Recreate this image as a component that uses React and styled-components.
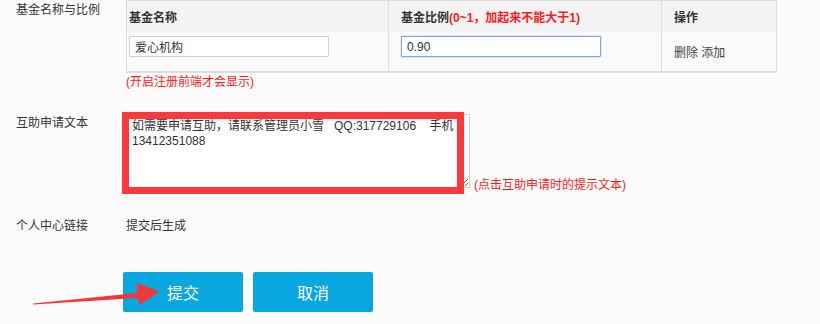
import React from "react";
import styled, { createGlobalStyle } from "styled-components";

const Global = createGlobalStyle`
  html, body { margin: 0; padding: 0; background: #fbfbfb; }
  body { font-family: "Liberation Sans", "Noto Sans CJK SC", sans-serif; font-size: 12px; color: #333; }
  * { box-sizing: border-box; }
`;

const Page = styled.div`
  position: relative;
  width: 820px;
  height: 324px;
  overflow: hidden;
  background: #fbfbfb;
`;

const Row = styled.div`
  display: grid;
  grid-template-columns: 110px 1fr;
  padding-left: 16px;
  margin-top: ${(p) => p.$top || 0}px;
`;

const Label = styled.div`
  font-size: 12px;
  line-height: 18px;
  color: #333;
  padding-top: ${(p) => p.$pt || 0}px;
`;

const Grid = styled.div`
  display: grid;
  grid-template-columns: 262px 273px 115px;
  width: 651px;
  border-top: 1px solid #dedede;
  border-left: 1px solid #dedede;
  border-bottom: 2px solid #dedede;
`;

const HeadCell = styled.div`
  height: 31px;
  display: flex;
  align-items: center;
  padding-left: ${(p) => p.$pl}px;
  background: #f3f3f3;
  border-right: 1px solid #dedede;
  font-weight: bold;
  font-size: 12px;
  color: #333;
`;

const Red = styled.span`
  color: #ff1a1a;
`;

const BodyCell = styled.div`
  height: 39px;
  display: flex;
  align-items: ${(p) => (p.$center ? "center" : "flex-start")};
  padding-left: ${(p) => p.$pl}px;
  padding-top: ${(p) => (p.$center ? 0 : 4)}px;
  background: #fafafa;
  border-right: 1px solid #dedede;
  font-size: 12px;
  color: #444;
`;

const Input = styled.input`
  width: 200px;
  height: 21px;
  padding: 0 5px;
  font-family: "Liberation Sans", "Noto Sans CJK SC", sans-serif;
  font-size: 12px;
  color: #333;
  background: #fff;
  border: 1px solid ${(p) => (p.$focus ? "#7fa6e9" : "#cfcfcf")};
  box-shadow: ${(p) => (p.$focus ? "0 0 2px #9dbcf2" : "none")};
  border-radius: 1px;
  outline: none;
`;

const Note = styled.div`
  font-size: 12px;
  line-height: 18px;
  color: #ff1a1a;
  margin-bottom: ${(p) => p.$mb || 0}px;
  padding-left: ${(p) => p.$pl || 0}px;
`;

const AreaLine = styled.div`
  display: flex;
  align-items: flex-end;
`;

const AreaWrap = styled.div`
  position: relative;
  width: 344px;
  height: 74px;
`;

const TextArea = styled.textarea`
  display: block;
  width: 344px;
  height: 74px;
  padding: 4px 5px;
  font-family: "Liberation Sans", "Noto Sans CJK SC", sans-serif;
  font-size: 12px;
  line-height: 15px;
  color: #333;
  background: #fff;
  border: 1px solid #cfcfcf;
  resize: both;
  outline: none;
`;

const Highlight = styled.div`
  position: absolute;
  left: -4px;
  top: -2px;
  width: 342px;
  height: 82px;
  border: 7px solid #fd383a;
  pointer-events: none;
`;

const Value = styled.div`
  font-size: 12px;
  line-height: 18px;
  color: #333;
`;

const Buttons = styled.div`
  display: flex;
  gap: 10px;
  padding-left: 123px;
  margin-top: 37px;
`;

const Button = styled.button`
  width: 120px;
  height: 40px;
  border: none;
  border-radius: 2px;
  background: #07a8e0;
  color: #fff;
  font-family: "Noto Sans CJK SC", sans-serif;
  font-size: 16px;
  cursor: pointer;
`;

const Arrow = styled.svg`
  position: absolute;
  left: 0;
  top: 270px;
  pointer-events: none;
`;

export default function App() {
  return (
    <Page>
      <Global />
      <Row>
        <Label $pt={1}>基金名称与比例</Label>
        <div>
          <Grid>
            <HeadCell $pl={2}>基金名称</HeadCell>
            <HeadCell $pl={12}>
              基金比例<Red>(0~1，加起来不能大于1)</Red>
            </HeadCell>
            <HeadCell $pl={12}>操作</HeadCell>
            <BodyCell $pl={2}>
              <Input defaultValue="爱心机构" />
            </BodyCell>
            <BodyCell $pl={12}>
              <Input $focus defaultValue="0.90" />
            </BodyCell>
            <BodyCell $pl={12} $center>
              删除 添加
            </BodyCell>
          </Grid>
          <Note>(开启注册前端才会显示)</Note>
        </div>
      </Row>
      <Row $top={23}>
        <Label>互助申请文本</Label>
        <AreaLine>
          <AreaWrap>
            <TextArea
              defaultValue={"如需要申请互助，请联系管理员小雪   QQ:317729106    手机\n13412351088"}
            />
            <Highlight />
          </AreaWrap>
          <Note $mb={-6} $pl={4}>(点击互助申请时的提示文本)</Note>
        </AreaLine>
      </Row>
      <Row $top={29}>
        <Label>个人中心链接</Label>
        <Value>提交后生成</Value>
      </Row>
      <Buttons>
        <Button>提交</Button>
        <Button>取消</Button>
      </Buttons>
      <Arrow width="170" height="40" viewBox="0 270 170 40">
        <polygon
          points="33,304.6 137,298 140,304.8 159.5,291.5 137,282.8 137,293 33,303.6"
          fill="#f2383a"
        />
      </Arrow>
    </Page>
  );
}
